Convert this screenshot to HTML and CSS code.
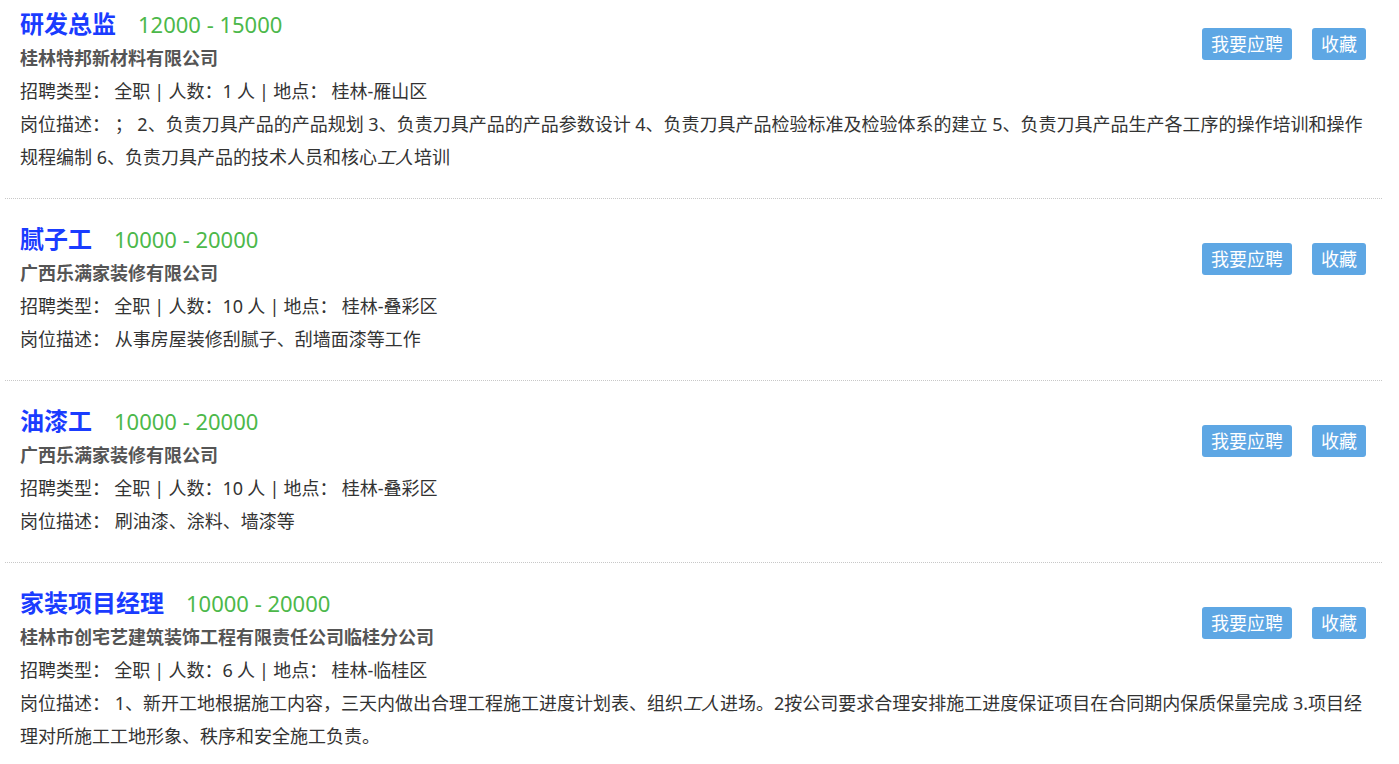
FILE: index.html
```html
<!DOCTYPE html>
<html>
<head>
  <meta charset="UTF-8">
  <title>职位列表</title>
  <link rel="stylesheet" href="styles.css">
</head>
<body>
  <div class="job-list">
    <div class="job">
      <div class="actions">
        <a class="btn" href="#">我要应聘</a>
        <a class="btn" href="#">收藏</a>
      </div>
      <div class="job-title">研发总监<span class="salary">12000 - 15000</span></div>
      <div class="company">桂林特邦新材料有限公司</div>
      <div class="info">招聘类型： 全职 | 人数：1 人 | 地点： 桂林-雁山区</div>
      <div class="desc">岗位描述： ； 2、负责刀具产品的产品规划 3、负责刀具产品的产品参数设计 4、负责刀具产品检验标准及检验体系的建立 5、负责刀具产品生产各工序的操作培训和操作规程编制 6、负责刀具产品的技术人员和核心<em>工人</em>培训</div>
    </div>

    <div class="job">
      <div class="actions">
        <a class="btn" href="#">我要应聘</a>
        <a class="btn" href="#">收藏</a>
      </div>
      <div class="job-title">腻子工<span class="salary">10000 - 20000</span></div>
      <div class="company">广西乐满家装修有限公司</div>
      <div class="info">招聘类型： 全职 | 人数：10 人 | 地点： 桂林-叠彩区</div>
      <div class="desc">岗位描述： 从事房屋装修刮腻子、刮墙面漆等工作</div>
    </div>

    <div class="job">
      <div class="actions">
        <a class="btn" href="#">我要应聘</a>
        <a class="btn" href="#">收藏</a>
      </div>
      <div class="job-title">油漆工<span class="salary">10000 - 20000</span></div>
      <div class="company">广西乐满家装修有限公司</div>
      <div class="info">招聘类型： 全职 | 人数：10 人 | 地点： 桂林-叠彩区</div>
      <div class="desc">岗位描述： 刷油漆、涂料、墙漆等</div>
    </div>

    <div class="job">
      <div class="actions">
        <a class="btn" href="#">我要应聘</a>
        <a class="btn" href="#">收藏</a>
      </div>
      <div class="job-title">家装项目经理<span class="salary">10000 - 20000</span></div>
      <div class="company">桂林市创宅艺建筑装饰工程有限责任公司临桂分公司</div>
      <div class="info">招聘类型： 全职 | 人数：6 人 | 地点： 桂林-临桂区</div>
      <div class="desc">岗位描述： 1、新开工地根据施工内容，三天内做出合理工程施工进度计划表、组织<em>工人</em>进场。2按公司要求合理安排施工进度保证项目在合同期内保质保量完成 3.项目经理对所施工工地形象、秩序和安全施工负责。</div>
    </div>
  </div>
</body>
</html>
```

FILE: styles.css
```css
body {
  margin: 0;
  padding: 0;
  background: #fff;
  font-family: "Noto Sans", "Noto Sans CJK SC", sans-serif;
  color: #333;
  font-size: 18px;
}
.job-list {
  margin: 0 17px 0 5px;
}
.job {
  padding: 23px 16px 24px 15px;
  border-bottom: 1px dotted #c8c8c8;
}
.job:first-child {
  padding-top: 7px;
}
.job-title {
  font-size: 24px;
  font-weight: bold;
  color: #1a3cff;
  line-height: 34px;
}
.salary {
  font-size: 22px;
  font-weight: normal;
  color: #4cb84a;
  margin-left: 22px;
}
.company {
  font-weight: bold;
  color: #555;
  line-height: 34px;
}
.info,
.desc {
  line-height: 33px;
}
.info {
  word-spacing: -0.5px;
}
.desc em {
  font-style: italic;
  padding-right: 1px;
}
.actions {
  float: right;
  display: flex;
  gap: 20px;
  margin-top: 21px;
}
.btn {
  display: block;
  background: #5ea7e4;
  color: #fff;
  text-decoration: none;
  font-size: 18px;
  line-height: 32px;
  height: 32px;
  padding: 0 9px;
  border-radius: 3px;
}
```
